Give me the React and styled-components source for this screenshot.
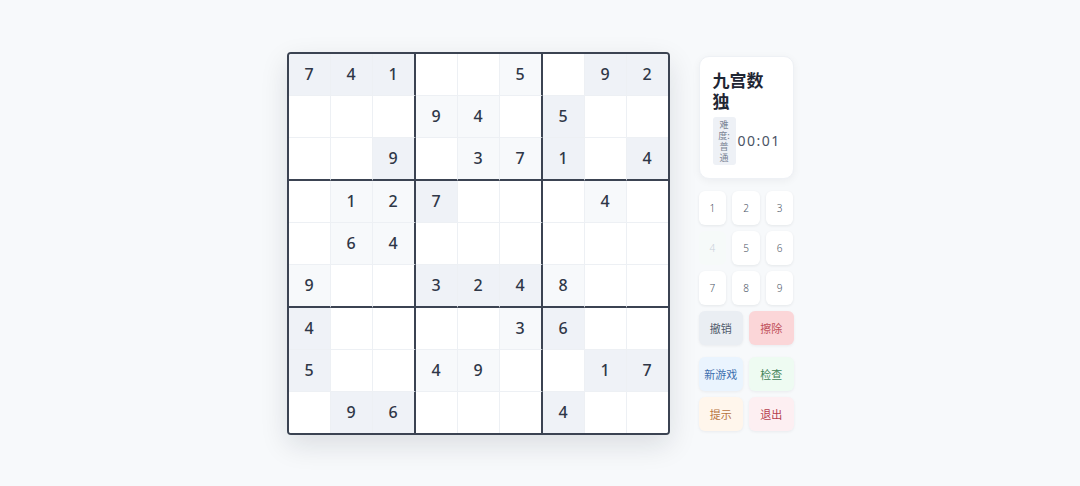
import React from "react";
import styled, { createGlobalStyle } from "styled-components";

const GlobalStyle = createGlobalStyle`
  body {
    margin: 0;
    background: #f7f9fb;
    font-family: "Noto Sans", "Noto Sans CJK SC", sans-serif;
  }
`;

const Page = styled.div`
  display: flex;
  justify-content: center;
  align-items: center;
  gap: 29px;
  height: 486px;
`;

const Board = styled.div`
  display: grid;
  grid-template-columns: 42px 42px 43px 42px 42px 43px 42px 42px 41px;
  grid-template-rows: 42px 42px 43px 42px 42px 43px 42px 42px 41px;
  border: 2px solid #3b4352;
  border-radius: 4px;
  overflow: hidden;
  background: #fff;
  box-shadow: 0 10px 28px rgba(15, 23, 42, 0.12);
`;

const Cell = styled.div`
  box-sizing: border-box;
  display: flex;
  align-items: center;
  justify-content: center;
  font-size: 16px;
  font-weight: 500;
  color: #2f3747;
  background: ${(p) => (p.$given ? (p.$even ? "#eff2f7" : "#f7f9fb") : "#fff")};
  border-right: ${(p) =>
    p.$col === 8 ? "none" : p.$col % 3 === 2 ? "2px solid #3b4352" : "1px solid #edf0f4"};
  border-bottom: ${(p) =>
    p.$row === 8 ? "none" : p.$row % 3 === 2 ? "2px solid #3b4352" : "1px solid #edf0f4"};
`;

const Panel = styled.div`
  display: flex;
  flex-direction: column;
  gap: 12px;
  width: 95px;
`;

const Card = styled.div`
  box-sizing: border-box;
  background: #fff;
  border: 1px solid #eef1f5;
  border-radius: 10px;
  padding: 12px 13px 13px;
  box-shadow: 0 2px 8px rgba(15, 23, 42, 0.05);
`;

const Title = styled.h1`
  margin: 0 0 6px;
  font-family: "Noto Sans CJK SC", sans-serif;
  font-size: 17px;
  line-height: 21px;
  font-weight: 700;
  color: #1f2633;
`;

const Meta = styled.div`
  display: flex;
  align-items: center;
  gap: 2px;
`;

const Badge = styled.span`
  box-sizing: border-box;
  flex: 0 0 23px;
  padding: 2px 4px;
  border-radius: 3px;
  background: #eef1f6;
  color: #7a8394;
  font-family: "Noto Sans CJK SC", sans-serif;
  font-size: 9px;
  line-height: 11px;
  text-align: center;
`;

const Timer = styled.span`
  flex: 0 0 auto;
  font-size: 14px;
  letter-spacing: 1.5px;
  color: #4a5465;
`;

const Pad = styled.div`
  display: grid;
  grid-template-columns: repeat(${(p) => p.$cols}, 1fr);
  gap: 6px;
`;

const Key = styled.button`
  height: 34px;
  border: none;
  border-radius: 6px;
  background: #fff;
  box-shadow: 0 1px 3px rgba(15, 23, 42, 0.08);
  font-family: "Noto Sans", sans-serif;
  font-size: 10px;
  font-weight: 300;
  color: #4a5465;
  padding: 0;
  &:disabled {
    background: #f6faf9;
    color: #c9d1da;
    box-shadow: none;
  }
`;

const tones = {
  slate: ["#eaeef3", "#4f5a6b"],
  red: ["#fbd6d8", "#c0505a"],
  blue: ["#eaf4fe", "#3e6fae"],
  green: ["#eefbf2", "#3f8358"],
  orange: ["#fff6ec", "#b7733e"],
  rose: ["#fdeff2", "#b53d4d"],
};

const Action = styled.button`
  height: 34px;
  border: none;
  border-radius: 6px;
  padding: 0;
  background: ${(p) => tones[p.$tone][0]};
  color: ${(p) => tones[p.$tone][1]};
  box-shadow: 0 1px 3px rgba(15, 23, 42, 0.06);
  font-family: "Noto Sans CJK SC", sans-serif;
  font-size: 11px;
`;

const Controls = styled.div`
  display: flex;
  flex-direction: column;
  gap: 6px;
`;

const grid = [
  "741..5.92",
  "...94.5..",
  "..9.371.4",
  ".127...4.",
  ".64......",
  "9..3248..",
  "4....36..",
  "5..49..17",
  ".96...4..",
];

export default function App() {
  return (
    <>
      <GlobalStyle />
      <Page>
        <Board>
          {grid.map((line, r) =>
            line.split("").map((ch, c) => {
              const box = Math.floor(r / 3) + Math.floor(c / 3);
              return (
                <Cell
                  key={`${r}-${c}`}
                  $row={r}
                  $col={c}
                  $given={ch !== "."}
                  $even={box % 2 === 0}
                >
                  {ch !== "." ? ch : ""}
                </Cell>
              );
            })
          )}
        </Board>
        <Panel>
          <Card>
            <Title>九宫数独</Title>
            <Meta>
              <Badge>难度:普通</Badge>
              <Timer>00:01</Timer>
            </Meta>
          </Card>
          <Controls>
            <Pad $cols={3}>
              {[1, 2, 3, 4, 5, 6, 7, 8, 9].map((n) => (
                <Key key={n} disabled={n === 4}>
                  {n}
                </Key>
              ))}
            </Pad>
            <Pad $cols={2}>
              <Action $tone="slate">撤销</Action>
              <Action $tone="red">擦除</Action>
            </Pad>
          </Controls>
          <Pad $cols={2}>
            <Action $tone="blue">新游戏</Action>
            <Action $tone="green">检查</Action>
            <Action $tone="orange">提示</Action>
            <Action $tone="rose">退出</Action>
          </Pad>
        </Panel>
      </Page>
    </>
  );
}
